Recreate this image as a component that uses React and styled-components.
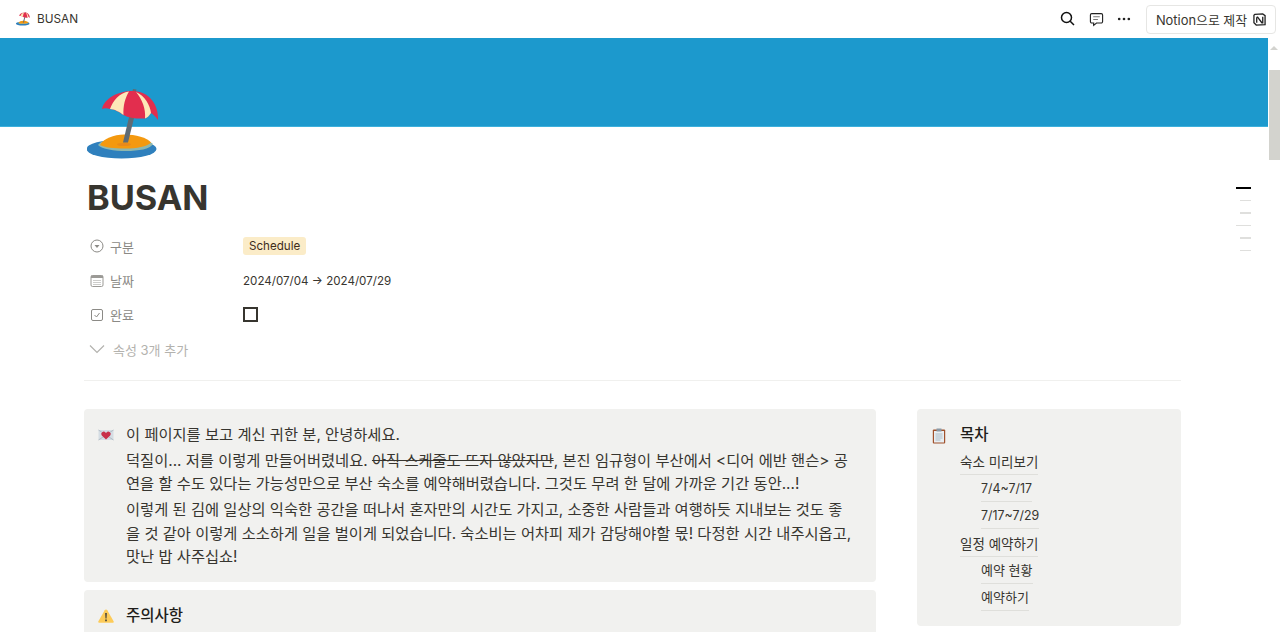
import React from "react";
import styled, { createGlobalStyle } from "styled-components";

const Global = createGlobalStyle`
  html, body { margin: 0; padding: 0; height: 100%; overflow: hidden; background: #fff; }
  body { font-family: Inter, "Noto Sans CJK KR", "Noto Sans", sans-serif; color: #37352f; }
  * { box-sizing: border-box; }
`;

const Page = styled.div`
  position: relative; width: 1280px; height: 632px; overflow: hidden;
  display: flex; flex-direction: column;
`;
const Topbar = styled.header`
  height: 38px; flex: none; display: flex; align-items: center;
  justify-content: space-between; padding: 0 4px 0 16px;
`;
const Crumb = styled.div`
  display: flex; align-items: center; gap: 7px; font-size: 11.800px; color: #37352f;
`;
const Actions = styled.div`display: flex; align-items: center;`;
const IconButton = styled.button`
  width: 28px; height: 28px; border: 0; background: none; padding: 0;
  display: flex; align-items: center; justify-content: center; color: #222;
`;
const BuiltWith = styled.div`
  margin-left: 8px; width: 130px; height: 29px; border: 1px solid #e6e6e4; border-radius: 4px;
  display: flex; align-items: center; justify-content: center; gap: 6px;
  font-size: 12.900px; color: #37352f; white-space: nowrap;
`;
const Body = styled.div`flex: 1; display: flex; min-height: 0;`;
const Scroller = styled.main`flex: 1; min-width: 0; overflow: hidden;`;
const Scrollbar = styled.div`
  width: 12px; flex: none; background: #fff; display: flex; flex-direction: column; align-items: center;
  padding-top: 8px;
`;
const ArrowUp = styled.div`
  width: 0; height: 0; border-left: 4px solid transparent; border-right: 4px solid transparent;
  border-bottom: 4px solid #d3d3cf;
`;
const Thumb = styled.div`width: 11px; height: 90px; margin-top: 20px; margin-left: 1px; background: #d3d3ce;`;
const Cover = styled.div`height: 89px; background: #1c99cd; border-bottom: 1px solid #3cb0dc;`;
const Content = styled.div`padding: 0 87px 0 84px;`;
const PageIcon = styled.div`margin: -38px 0 0 3px; height: 74px; line-height: 0;`;
const Title = styled.h1`
  margin: 14px 0 0 3px; height: 42px; font-size: 34.300px; line-height: 42px; font-weight: 700;
  color: #37352f; letter-spacing: 0;
`;
const Props = styled.div`margin-top: 10px; display: flex; flex-direction: column;`;
const PropRow = styled.div`
  height: 34.400px; display: flex; align-items: center; font-size: 11.600px;
`;
const PropName = styled.div`
  width: 159px; padding-left: 6px; display: flex; align-items: center; gap: 6px; color: #8b8a86; font-size: 13px;
`;
const Tag = styled.span`
  background: #fbecc8; color: #402c1b; border-radius: 3px; height: 18px; padding: 0 6px;
  display: inline-flex; align-items: center; font-size: 11.600px;
`;
const Checkbox = styled.span`
  width: 15px; height: 15px; border: 2px solid #37352f; display: block;
`;
const More = styled.div`
  height: 34px; padding-left: 5px; display: flex; align-items: center; gap: 8px; color: #b3b2ae; font-size: 13px;
`;
const Divider = styled.div`margin: 14px 0 0; height: 1px; background: #f0f0ee;`;
const Columns = styled.div`
  margin-top: 28px; display: grid; grid-template-columns: 792px 264px; column-gap: 41px; align-items: start;
`;
const Stack = styled.div`display: flex; flex-direction: column; gap: 8px;`;
const Callout = styled.section`
  background: #f1f1ef; border-radius: 4px; padding: ${p => p.$pad || "14px 16px 13px 13px"};
  display: flex; gap: 11px;
`;
const CalloutIcon = styled.div`width: 18px; flex: none; padding-top: 5px; padding-left: 1px; line-height: 0;`;
const CalloutBody = styled.div`flex: 1; min-width: 0; font-size: 15.300px; line-height: 23.400px; color: #37352f;`;
const Para = styled.p`margin: 0 0 ${p => p.$gap || "3px"}; &:last-child { margin-bottom: 0; }`;
const Struck = styled.s`color: #37352f;`;
const CalloutHead = styled.div`font-size: 15.500px; line-height: 23px; font-weight: 500; color: #1f1e1b;`;
const TocList = styled.div`margin-top: 2px; display: flex; flex-direction: column; align-items: flex-start;`;
const TocItem = styled.a`
  height: 27.100px; margin-left: ${p => (p.$sub ? "21px" : "0")}; display: flex; align-items: center;
  font-size: ${p => (p.$sub ? (p.$num ? "12.400px" : "13px") : "13.500px")}; color: #37352f; border-bottom: 1px solid #dfdfdb;
`;
const Rail = styled.div`
  position: absolute; right: 29px; top: 187px; display: flex; flex-direction: column; align-items: flex-end; gap: 11.100px;
`;
const Tick = styled.span`
  display: block; height: 1.500px; width: ${p => p.$w}px; background: ${p => (p.$on ? "#000" : "#dfdfdd")};
`;

const Beach = ({ size = 72 }) => (
  <svg width={size} height={size} viewBox="0 0 72 72">
    <ellipse cx="34.500" cy="60" rx="35" ry="9.500" fill="#2f80bd" />
    <path d="M11 56c3-4 8-5 12-6h20c8 0 20 1 23 5-3 5-14 7-27 7-12 0-24-2-28-6z" fill="#8fb7ad" />
    <path d="M13 56C16 50 27 45.500 37 45.500c12 0 23 3 27 8-4 4-14 6-26 6-11 0-21-1-25-3.500z" fill="#f4990f" />
    <ellipse cx="37" cy="55.500" rx="7" ry="1.600" fill="#ea8a1a" />
    <path d="M46 0l3.500.500-1 4-3.500-.500z" fill="#5f6b74" />
    <path d="M42.500 26l5 1-6.500 26.500h-5z" fill="#5f6b74" />
    <path d="M15 20C17 10 30 2 46 2c16 0 26 14 25 29-3-4-5-6-7-7-2 3-4 5-6 5.500-8 .5-16-.5-21.500-3.500C32 23 27 20 23 20c-3-1-6-1-8 0z" fill="#e22e4e" />
    <path d="M42 2.500C32 4 26 12 23 20c4 0 10 3 13.500 6C36 17 38 9 42 2.500zM49 3c6 7 10 17 9 26.500 2-.5 4-2.500 6-5.500C63 16 58 7 49 3z" fill="#fde8b8" />
  </svg>
);

const Chat = () => (
  <svg width="15" height="15" viewBox="0 0 16 16" fill="none" stroke="#222" strokeWidth="1.200">
    <path d="M3 1.700h10a1.500 1.500 0 0 1 1.500 1.500v7a1.500 1.500 0 0 1-1.500 1.500H8l-3 2.500v-2.500H3a1.500 1.500 0 0 1-1.500-1.500v-7A1.500 1.500 0 0 1 3 1.700z" />
    <path d="M4.500 5h7M4.500 8h5" stroke="#777" />
  </svg>
);

const Search = () => (
  <svg width="16" height="16" viewBox="0 0 16 16" fill="none" stroke="#111" strokeWidth="1.500">
    <circle cx="6.500" cy="6.500" r="5" />
    <path d="M10.200 10.200L14 14" />
  </svg>
);

const Dots = () => (
  <svg width="14" height="14" viewBox="0 0 16 16" fill="#222">
    <circle cx="2.500" cy="8" r="1.500" /><circle cx="8" cy="8" r="1.500" /><circle cx="13.500" cy="8" r="1.500" />
  </svg>
);

const NotionMark = () => (
  <svg width="13" height="13" viewBox="0 0 14 14">
    <path d="M2 1.500L10.500 1 13 2.800V12.500L3.500 13 1 10.500V2.500z" fill="#fff" stroke="#222" strokeWidth="1.400" />
    <path d="M4 4.500v6M4 4.500h1l4.500 6h1v-6.500" fill="none" stroke="#222" strokeWidth="1.400" />
  </svg>
);

const SelectIcon = () => (
  <svg width="14" height="14" viewBox="0 0 14 14" fill="none" stroke="#8b8a86">
    <circle cx="7" cy="7" r="6" /><path d="M4.500 6h5L7 9z" fill="#8b8a86" stroke="none" />
  </svg>
);
const DateIcon = () => (
  <svg width="14" height="14" viewBox="0 0 14 14" fill="none" stroke="#9b9a96">
    <rect x="1" y="1.500" width="12" height="11" rx="1.500" />
    <rect x="1" y="1.500" width="12" height="2.500" fill="#9b9a96" stroke="none" />
    <path d="M3.500 6.500h7M3.500 8.500h7M3.500 10.500h7" strokeDasharray="1 1" />
  </svg>
);
const CheckIcon = () => (
  <svg width="14" height="14" viewBox="0 0 14 14" fill="none" stroke="#8b8a86">
    <rect x="1.500" y="1.500" width="11" height="11" rx="1.500" /><path d="M4.500 7l2 2 3-4" />
  </svg>
);
const Chevron = () => (
  <svg width="16" height="10" viewBox="0 0 16 10" fill="none" stroke="#b3b2ae" strokeWidth="1.200"><path d="M1 1.500l7 7 7-7" /></svg>
);
const Letter = () => (
  <svg width="16" height="14" viewBox="0 0 16 14">
    <rect x=".5" y="2" width="15" height="10" fill="#d5dde4" />
    <path d="M.5 2L8 7l7.500-5M.5 12L8 7l7.500 5" fill="none" stroke="#aab4bd" strokeWidth=".8" />
    <path d="M8 11.500L3.800 7.500a2.300 2.300 0 0 1 3.700-3L8 5l.5-.5a2.300 2.300 0 0 1 3.700 3z" fill="#c8304a" />
  </svg>
);
const Warning = () => (
  <svg width="16" height="14" viewBox="0 0 16 14">
    <path d="M8 .5c.6 0 1 .3 1.300.8l6.300 11c.4.8 0 1.500-.9 1.500H1.300c-.9 0-1.300-.7-.9-1.500l6.300-11C7 .8 7.400.5 8 .5z" fill="#fdcb58" />
    <path d="M7.200 4h1.600l-.3 5.500h-1zM7.200 10.500h1.600v1.800H7.200z" fill="#3a3a3a" />
  </svg>
);
const Clipboard = () => (
  <svg width="14" height="16" viewBox="0 0 14 16">
    <rect x=".8" y="1.500" width="12.400" height="14" rx="1" fill="#a0522d" />
    <rect x="2" y="3" width="10" height="11.500" fill="#e8eef2" />
    <rect x="4.500" y=".5" width="5" height="3" fill="#8a99a5" />
    <path d="M3.500 6h7M3.500 8h7M3.500 10h7M3.500 12h5" stroke="#9fb0bc" strokeWidth=".8" />
  </svg>
);

export default function App() {
  return (
    <Page>
      <Global />
      <Topbar>
        <Crumb><Beach size={14} />BUSAN</Crumb>
        <Actions>
          <IconButton><Search /></IconButton>
          <IconButton><Chat /></IconButton>
          <IconButton><Dots /></IconButton>
          <BuiltWith>Notion으로 제작 <NotionMark /></BuiltWith>
        </Actions>
      </Topbar>
      <Body>
        <Scroller>
          <Cover />
          <Content>
            <PageIcon><Beach /></PageIcon>
            <Title>BUSAN</Title>
            <Props>
              <PropRow>
                <PropName><SelectIcon />구분</PropName>
                <Tag>Schedule</Tag>
              </PropRow>
              <PropRow>
                <PropName><DateIcon />날짜</PropName>
                2024/07/04 → 2024/07/29
              </PropRow>
              <PropRow>
                <PropName><CheckIcon />완료</PropName>
                <Checkbox />
              </PropRow>
              <More><Chevron />속성 3개 추가</More>
            </Props>
            <Divider />
            <Columns>
              <Stack>
                <Callout>
                  <CalloutIcon><Letter /></CalloutIcon>
                  <CalloutBody>
                    <Para $gap="2px">이 페이지를 보고 계신 귀한 분, 안녕하세요.</Para>
                    <Para>
                      덕질이... 저를 이렇게 만들어버렸네요. <Struck>아직 스케줄도 뜨지 않았지만</Struck>, 본진 임규형이 부산에서 &lt;디어 에반 핸슨&gt; 공<br />
                      연을 할 수도 있다는 가능성만으로 부산 숙소를 예약해버렸습니다. 그것도 무려 한 달에 가까운 기간 동안...!
                    </Para>
                    <Para>
                      이렇게 된 김에 일상의 익숙한 공간을 떠나서 혼자만의 시간도 가지고, 소중한 사람들과 여행하듯 지내보는 것도 좋<br />
                      을 것 같아 이렇게 소소하게 일을 벌이게 되었습니다. 숙소비는 어차피 제가 감당해야할 몫! 다정한 시간 내주시옵고,<br />
                      맛난 밥 사주십쇼!
                    </Para>
                  </CalloutBody>
                </Callout>
                <Callout>
                  <CalloutIcon><Warning /></CalloutIcon>
                  <CalloutHead>주의사항</CalloutHead>
                </Callout>
              </Stack>
              <Callout $pad="14px 16px 15px 14px">
                <CalloutIcon><Clipboard /></CalloutIcon>
                <div>
                  <CalloutHead>목차</CalloutHead>
                  <TocList>
                    <TocItem>숙소 미리보기</TocItem>
                    <TocItem $sub $num>7/4~7/17</TocItem>
                    <TocItem $sub $num>7/17~7/29</TocItem>
                    <TocItem>일정 예약하기</TocItem>
                    <TocItem $sub>예약 현황</TocItem>
                    <TocItem $sub>예약하기</TocItem>
                  </TocList>
                </div>
              </Callout>
            </Columns>
          </Content>
        </Scroller>
        <Scrollbar><ArrowUp /><Thumb /></Scrollbar>
      </Body>
      <Rail>
        <Tick $on $w={15} /><Tick $w={11} /><Tick $w={11} /><Tick $w={15} /><Tick $w={11} /><Tick $w={11} />
      </Rail>
    </Page>
  );
}
